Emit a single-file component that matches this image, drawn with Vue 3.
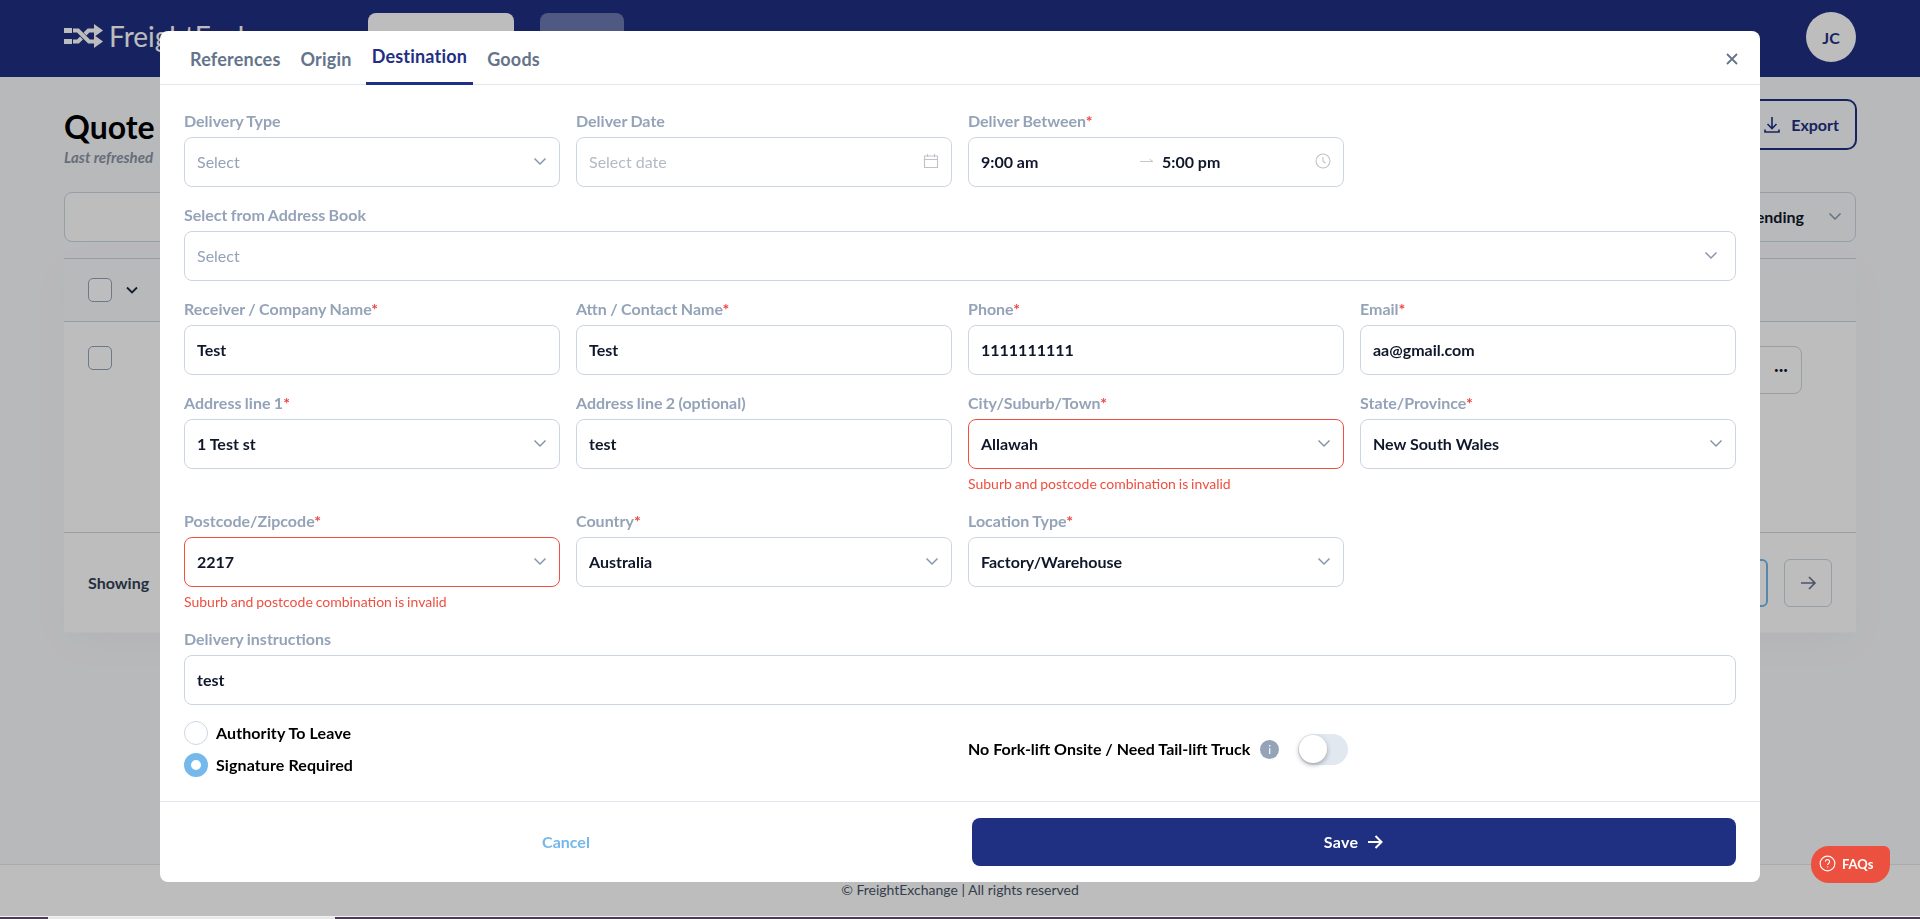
<template>
  <div class="page">
    <header class="topbar">
      <div class="logo">
        <svg width="40" height="24" viewBox="0 0 40 24" fill="none">
          <rect x="0" y="4" width="8" height="5" fill="#fff" />
          <rect x="0" y="15" width="8" height="5" fill="#fff" />
          <path d="M9 6.500h5l11 11h6M9 17.500h5l3.500-3.500M21 10l3.500-3.500H31" stroke="#fff" stroke-width="4" />
          <path d="M30 0l9 6.500-9 6.500zM30 11l9 6.500-9 6.500z" fill="#fff" />
        </svg>
        <span>FreightExchange</span>
      </div>
      <div class="nav-btn nav-white" />
      <div class="nav-btn nav-ghost" />
      <div class="avatar">JC</div>
    </header>

    <main class="main">
      <div class="title-row">
        <div>
          <h1>Quote</h1>
          <p class="refreshed">Last refreshed</p>
        </div>
        <button class="export">
          <svg width="18" height="18" viewBox="0 0 18 18" fill="none" stroke="#1f3083" stroke-width="1.6">
            <path d="M9 1v11M4.500 8 9 12.500 13.500 8M2 13.500V16h14v-2.500" />
          </svg>
          Export
        </button>
      </div>

      <div class="filter-row">
        <div class="search" />
        <div class="sort">
          Descending
          <svg class="chev" width="14" height="14" viewBox="0 0 14 14"><path d="M1.500 4.500 7 10l5.500-5.500" /></svg>
        </div>
      </div>

      <section class="card">
        <div class="thead">
          <span class="check" />
          <svg width="14" height="14" viewBox="0 0 14 14" fill="none" stroke="#1e293b" stroke-width="1.800"><path d="M2 4.500 7 9.500l5-5" /></svg>
        </div>
        <div class="tbody">
          <span class="check" />
          <button class="more">•••</button>
        </div>
        <div class="tfoot">
          <span class="showing">Showing</span>
          <div class="pager">
            <button class="page-btn current" />
            <button class="page-btn">
              <svg width="20" height="20" viewBox="0 0 20 20" fill="none" stroke="#64748b" stroke-width="1.600"><path d="M3 10h14M11 4l6 6-6 6" /></svg>
            </button>
          </div>
        </div>
      </section>
    </main>

    <footer class="page-foot">© FreightExchange | All rights reserved</footer>
  </div>

  <div class="overlay">
    <div class="modal">
      <div class="tabs">
        <div v-for="tab in tabs" :key="tab" class="tab" :class="{ active: tab === 'Destination' }">{{ tab }}</div>
        <svg class="close" width="14" height="14" viewBox="0 0 14 14" fill="none" stroke="#64748b" stroke-width="1.800">
          <path d="M2 2l10 10M12 2 2 12" />
        </svg>
      </div>

      <div class="form">
        <div v-for="f in fields" :key="f.label" class="field" :class="{ wide: f.wide }">
          <label>{{ f.label }}<em v-if="f.required">*</em></label>
          <div class="input" :class="{ invalid: f.error, inset: f.wide && f.kind }">
            <template v-if="f.kind === 'time'">
              <span class="time">9:00 am</span>
              <svg class="time-arrow" width="16" height="8" viewBox="0 0 16 8" fill="none" stroke="#c3c7cd"><path d="M1 4.500h13L10.500 2" /></svg>
              <span class="time-end">5:00 pm</span>
              <svg width="16" height="16" viewBox="0 0 16 16" fill="none" stroke="#bfc3c9" stroke-width="1.100">
                <circle cx="8" cy="8" r="7" />
                <path d="M8 4v4.300l2.500 2" />
              </svg>
            </template>
            <template v-else>
              <span :class="{ placeholder: f.placeholder, faint: f.kind === 'date' }">{{ f.value || f.placeholder }}</span>
              <svg v-if="f.kind === 'date'" width="16" height="16" viewBox="0 0 16 16" fill="none" stroke="#bfc3c9" stroke-width="1.100">
                <path d="M1.500 3h13v11.500h-13zM1.500 6.500h13M4.500 1v3M11.500 1v3" />
              </svg>
              <svg v-if="f.kind === 'select'" class="chev" width="14" height="14" viewBox="0 0 14 14"><path d="M1.500 4.500 7 10l5.500-5.500" /></svg>
            </template>
          </div>
          <p v-if="f.error" class="error">{{ f.error }}</p>
        </div>

        <div class="radios">
          <div class="radio-row"><span class="radio" /><span class="radio-text">Authority To Leave</span></div>
          <div class="radio-row"><span class="radio on" /><span class="radio-text">Signature Required</span></div>
        </div>
        <div class="tail-lift">
          <span class="tail-text">No Fork-lift Onsite / Need Tail-lift Truck</span>
          <span class="info">i</span>
          <span class="toggle"><span class="knob" /></span>
        </div>
      </div>

      <div class="actions">
        <button class="cancel">Cancel</button>
        <button class="save">
          Save
          <svg width="18" height="18" viewBox="0 0 18 18" fill="none" stroke="#fff" stroke-width="2"><path d="M2 9h13M9.500 3l6 6-6 6" /></svg>
        </button>
      </div>
    </div>
  </div>

  <div class="faq">
    <svg width="17" height="17" viewBox="0 0 18 18" fill="none" stroke="#fff" stroke-width="1.200">
      <circle cx="9" cy="9" r="7.800" />
      <path d="M6.800 7a2.200 2.200 0 1 1 3.400 1.900c-.8.500-1.200.9-1.200 1.800M9 12.300v1" />
    </svg>
    <span>FAQs</span>
  </div>

  <div class="strip"><i /><b /><i class="rest" /></div>
</template>

<script setup>
const tabs = ['References', 'Origin', 'Destination', 'Goods']
const invalid = 'Suburb and postcode combination is invalid'

const fields = [
  { label: 'Delivery Type', placeholder: 'Select', kind: 'select' },
  { label: 'Deliver Date', placeholder: 'Select date', kind: 'date' },
  { label: 'Deliver Between', required: true, kind: 'time' },
  { label: 'Select from Address Book', placeholder: 'Select', kind: 'select', wide: true },
  { label: 'Receiver / Company Name', required: true, value: 'Test' },
  { label: 'Attn / Contact Name', required: true, value: 'Test' },
  { label: 'Phone', required: true, value: '1111111111' },
  { label: 'Email', required: true, value: 'aa@gmail.com' },
  { label: 'Address line 1', required: true, value: '1 Test st', kind: 'select' },
  { label: 'Address line 2 (optional)', value: 'test' },
  { label: 'City/Suburb/Town', required: true, value: 'Allawah', kind: 'select', error: invalid },
  { label: 'State/Province', required: true, value: 'New South Wales', kind: 'select' },
  { label: 'Postcode/Zipcode', required: true, value: '2217', kind: 'select', error: invalid },
  { label: 'Country', required: true, value: 'Australia', kind: 'select' },
  { label: 'Location Type', required: true, value: 'Factory/Warehouse', kind: 'select' },
  { label: 'Delivery instructions', value: 'test', wide: true }
]
</script>

<style>
html, body {
  margin: 0;
  height: 919px;
  overflow: hidden;
}
</style>

<style scoped>
* {
  box-sizing: border-box;
}

button {
  font-family: inherit;
  background: none;
  cursor: pointer;
}

.page {
  height: 919px;
  display: flex;
  flex-direction: column;
  background: #fff;
  font-family: Lato, "Noto Sans", sans-serif;
  color: #0f172a;
}

.topbar {
  height: 77px;
  flex: none;
  display: flex;
  align-items: center;
  padding: 0 64px;
  background: #1f3083;
}

.logo {
  width: 304px;
  margin-bottom: 6px;
  display: flex;
  align-items: center;
  gap: 5px;
  color: #fff;
  font-size: 28px;
  font-weight: 400;
  white-space: nowrap;
}

.nav-btn {
  height: 52px;
  border-radius: 8px;
}

.nav-white {
  width: 146px;
  background: #fff;
}

.nav-ghost {
  width: 84px;
  margin-left: 26px;
  background: rgba(255, 255, 255, 0.35);
}

.avatar {
  width: 50px;
  height: 50px;
  margin: 0 0 3px auto;
  display: flex;
  align-items: center;
  justify-content: center;
  border-radius: 50%;
  background: #fff;
  color: #1f3083;
  font-size: 16px;
  font-weight: 700;
}

.main {
  flex: 1;
  padding: 23px 64px 0;
  background: #f9fafd;
  border-bottom: 1px solid #e2e8f0;
}

.title-row {
  height: 50px;
  display: flex;
  justify-content: space-between;
}

h1 {
  margin: 8px 0 0;
  font-size: 32px;
  line-height: 38px;
  font-weight: 700;
  color: #000;
}

.refreshed {
  margin: 3px 0 0;
  font-size: 15px;
  line-height: 17px;
  font-style: italic;
  font-weight: 700;
  color: #8a94a6;
}

.export {
  width: 200px;
  height: 51px;
  margin: -1px -1px 0 0;
  display: flex;
  align-items: center;
  justify-content: flex-end;
  gap: 10px;
  padding: 0 16px 0 0;
  border: 2px solid #1f3083;
  border-radius: 10px;
  color: #1f3083;
  font-size: 16px;
  font-weight: 700;
}

.filter-row {
  display: flex;
  justify-content: space-between;
  margin-top: 42px;
}

.search {
  width: 300px;
  height: 50px;
  border: 1px solid #cbd5e1;
  border-radius: 8px;
  background: #fff;
}

.sort {
  width: 200px;
  height: 50px;
  display: flex;
  align-items: center;
  justify-content: flex-end;
  gap: 24px;
  padding: 0 13px 2px 0;
  border: 1px solid #cbd5e1;
  border-radius: 8px;
  font-size: 16px;
  font-weight: 700;
  white-space: nowrap;
}

.card {
  height: 375px;
  margin-top: 16px;
  border-top: 1px solid #cbd5e1;
  box-shadow: 0 10px 40px rgba(0, 0, 0, 0.03);
}

.thead {
  height: 63px;
  display: flex;
  align-items: center;
  gap: 13px;
  padding-left: 24px;
  border-bottom: 1px solid #cbd5e1;
}

.check {
  width: 24px;
  height: 24px;
  border: 1px solid #94a3b8;
  border-radius: 5px;
  background: #fff;
}

.tbody {
  height: 210px;
  display: flex;
  align-items: flex-start;
  justify-content: space-between;
  padding: 24px 54px 0 24px;
  background: #fff;
}

.more {
  width: 60px;
  height: 48px;
  border: 1px solid #cbd5e1;
  border-radius: 8px;
  color: #0f172a;
  font-size: 8px;
  text-align: right;
  padding-right: 13px;
}

.tfoot {
  height: 100px;
  display: flex;
  align-items: center;
  justify-content: space-between;
  padding: 0 24px;
  background: #fff;
  border-top: 1px solid #cbd5e1;
}

.showing {
  color: #334155;
  font-size: 16px;
  font-weight: 700;
}

.pager {
  display: flex;
  gap: 16px;
}

.page-btn {
  width: 48px;
  height: 48px;
  display: flex;
  align-items: center;
  justify-content: center;
  padding: 0;
  border: 1px solid #cbd5e1;
  border-radius: 6px;
}

.current {
  border: 2px solid #75b8eb;
}

.page-foot {
  height: 54px;
  flex: none;
  padding-top: 16px;
  text-align: center;
  font-size: 14px;
  color: #475569;
}

.overlay {
  position: fixed;
  inset: 0;
  display: flex;
  justify-content: center;
  padding-top: 31px;
  background: rgba(0, 0, 0, 0.26);
  font-family: Lato, "Noto Sans", sans-serif;
}

.modal {
  width: 1600px;
  height: 851px;
  display: flex;
  flex-direction: column;
  border-radius: 8px;
  background: #fff;
}

.tabs {
  height: 54px;
  flex: none;
  display: flex;
  align-items: stretch;
  gap: 8px;
  padding: 0 24px;
  border-bottom: 1px solid #e2e8f0;
}

.tab {
  height: 54px;
  padding: 0 6px;
  line-height: 56px;
  font-size: 18px;
  font-weight: 700;
  letter-spacing: 0.2px;
  color: #64748b;
}

.tab.active {
  line-height: 51px;
  color: #1f3083;
  border-bottom: 3px solid #1f3083;
}

.close {
  margin: 21px -3px 0 auto;
}

.form {
  flex: 1;
  display: grid;
  grid-template-columns: repeat(4, 376px);
  gap: 16px;
  align-content: start;
  padding: 24px 24px 0;
}

.field.wide {
  grid-column: 1 / -1;
}

label {
  display: block;
  height: 28px;
  line-height: 24px;
  font-size: 16px;
  font-weight: 700;
  word-spacing: -0.500px;
  color: #94a3b8;
}

label em {
  font-style: normal;
  color: #ef4444;
}

.input {
  height: 50px;
  display: flex;
  align-items: center;
  justify-content: space-between;
  padding: 0 12px 2px;
  border: 1px solid #cbd5e1;
  border-radius: 8px;
  font-size: 16px;
  font-weight: 700;
  color: #0f172a;
}

.input.inset {
  padding-right: 17px;
}

.input.invalid {
  border-color: #ef4f3f;
}

.placeholder {
  font-weight: 400;
  color: #94a3b8;
}

.placeholder.faint {
  color: #b4bac4;
}

.time {
  width: 158px;
  flex: none;
}

.time-arrow {
  flex: none;
}

.time-end {
  flex: 1;
  margin-left: 7px;
}

.chev {
  fill: none;
  stroke: #8796ad;
  stroke-width: 1.500;
}

.error {
  height: 24px;
  margin: 0;
  padding-top: 6px;
  font-size: 14px;
  line-height: 18px;
  word-spacing: -0.700px;
  color: #ef4f3f;
}

.radios {
  grid-column: span 2;
  display: flex;
  flex-direction: column;
  gap: 8px;
}

.radio-row {
  height: 24px;
  display: flex;
  align-items: center;
  gap: 8px;
  font-size: 16px;
  font-weight: 700;
  color: #000;
}

.radio-text {
  margin-bottom: 2px;
  letter-spacing: 0.1px;
}

.tail-text {
  margin-bottom: 2px;
}

.radio {
  width: 24px;
  height: 24px;
  border: 1px solid #cbd5e1;
  border-radius: 50%;
}

.radio.on {
  border: 7px solid #75b8eb;
}

.tail-lift {
  grid-column: span 2;
  height: 56px;
  display: flex;
  align-items: center;
  font-size: 16px;
  font-weight: 700;
  color: #000;
}

.info {
  width: 19px;
  height: 19px;
  margin-left: 10px;
  display: flex;
  align-items: center;
  justify-content: center;
  border-radius: 50%;
  background: #94a3b8;
  color: #fff;
  font-size: 12px;
  font-weight: 400;
}

.toggle {
  width: 50px;
  height: 31px;
  margin-left: 19px;
  display: flex;
  align-items: center;
  border-radius: 16px;
  background: #e2e8f0;
}

.knob {
  width: 28px;
  height: 28px;
  margin-left: 1px;
  border-radius: 50%;
  background: #fff;
  box-shadow: 0 2px 5px rgba(0, 0, 0, 0.3);
}

.actions {
  flex: none;
  display: grid;
  grid-template-columns: 1fr 1fr;
  gap: 24px;
  padding: 16px 24px;
  border-top: 1px solid #e2e8f0;
}

.cancel {
  height: 48px;
  padding-bottom: 2px;
  border: 0;
  color: #75b8eb;
  font-size: 16px;
  font-weight: 700;
}

.save {
  height: 48px;
  display: flex;
  align-items: center;
  justify-content: center;
  gap: 8px;
  padding-bottom: 2px;
  border: 0;
  border-radius: 8px;
  background: #1f3083;
  color: #fff;
  font-size: 16px;
  font-weight: 700;
  letter-spacing: 0.3px;
}

.faq {
  position: fixed;
  left: 1811px;
  top: 846px;
  width: 79px;
  height: 37px;
  display: flex;
  align-items: center;
  gap: 6px;
  padding: 0 0 2px 8px;
  border-radius: 18px 6px 18px 18px;
  background: #ec503f;
  color: #fff;
  font-family: Lato, "Noto Sans", sans-serif;
  font-size: 13px;
  font-weight: 700;
}

.strip {
  position: fixed;
  left: 0;
  right: 0;
  top: 916px;
  height: 3px;
  display: flex;
  border-top: 1px solid #f1f1f1;
}

.strip i {
  width: 48px;
  background: #4a3a55;
}

.strip b {
  width: 287px;
  background: #e8e8e8;
}

.strip .rest {
  flex: 1;
}
</style>
